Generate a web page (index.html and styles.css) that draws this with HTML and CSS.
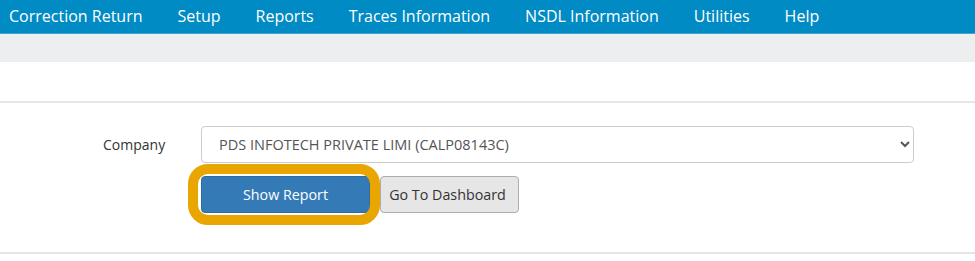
FILE: index.html
```html
<!DOCTYPE html>
<html lang="en">
<head>
    <meta charset="UTF-8">
    <meta name="viewport" content="width=device-width, initial-scale=1.0">
    <title>Reports</title>
    <link rel="stylesheet" href="styles.css">
</head>
<body>
    <nav class="topnav">
        <a href="#">Correction Return</a>
        <a href="#">Setup</a>
        <a href="#">Reports</a>
        <a href="#">Traces Information</a>
        <a href="#">NSDL Information</a>
        <a href="#">Utilities</a>
        <a href="#">Help</a>
    </nav>
    <div class="subbar"></div>
    <div class="page-head"></div>

    <div class="report-panel">
        <div class="form-row">
            <label class="form-label" for="company">Company</label>
            <select id="company" class="form-select">
                <option>PDS INFOTECH PRIVATE LIMI (CALP08143C)</option>
            </select>
        </div>
        <div class="form-row">
            <span class="form-label"></span>
            <div class="actions">
                <span class="highlight">
                    <button class="btn btn-primary">Show Report</button>
                </span>
                <button class="btn btn-default">Go To Dashboard</button>
            </div>
        </div>
    </div>
</body>
</html>
```

FILE: styles.css
```css
body {
    margin: 0;
    padding: 0;
    background-color: #ffffff;
    font-family: 'Open Sans', 'Noto Sans', sans-serif;
}

/* Top menu */
.topnav {
    display: flex;
    gap: 35px;
    height: 32px;
    padding-left: 9px;
    padding-bottom: 1px;
    align-items: center;
    background-color: #008bc4;
    border-bottom: 1px solid #3fa6d2;
}

.topnav a {
    color: #ffffff;
    text-decoration: none;
    font-size: 16px;
}

.subbar {
    height: 28px;
    background-color: #edeef0;
}

.page-head {
    height: 39px;
    border-bottom: 2px solid #e6e6e6;
}

/* Form panel */
.report-panel {
    padding: 23px 0 39px;
    border-bottom: 2px solid #e6e6e6;
}

.form-row {
    display: grid;
    grid-template-columns: 201px 713px;
    align-items: center;
}

.form-row + .form-row {
    margin-top: 13px;
}

.form-label {
    padding-left: 103px;
    font-size: 14px;
    color: #333333;
}

.form-select {
    height: 37px;
    padding: 0 10px 0 13px;
    font-family: inherit;
    font-size: 14.5px;
    color: #555555;
    background-color: #ffffff;
    border: 1px solid #cccccc;
    border-radius: 4px;
}

.actions {
    display: flex;
    gap: 10px;
}

.btn {
    height: 37px;
    padding: 0 4px;
    font-family: inherit;
    font-size: 14.3px;
    border-radius: 4px;
    white-space: nowrap;
}

.btn-primary {
    width: 169px;
    color: #ffffff;
    background-color: #337ab7;
    border: 1px solid #2e6da4;
}

.btn-default {
    width: 139px;
    padding-right: 8px;
    color: #333333;
    background-color: #e6e6e6;
    border: 1px solid #adadad;
}

/* Orange marker drawn round the button */
.highlight {
    position: relative;
    display: flex;
}

.highlight::after {
    content: "";
    position: absolute;
    top: -12px;
    left: -13px;
    right: -10px;
    bottom: -12px;
    border: 10px solid #e9a500;
    border-radius: 20px;
    pointer-events: none;
}
```
